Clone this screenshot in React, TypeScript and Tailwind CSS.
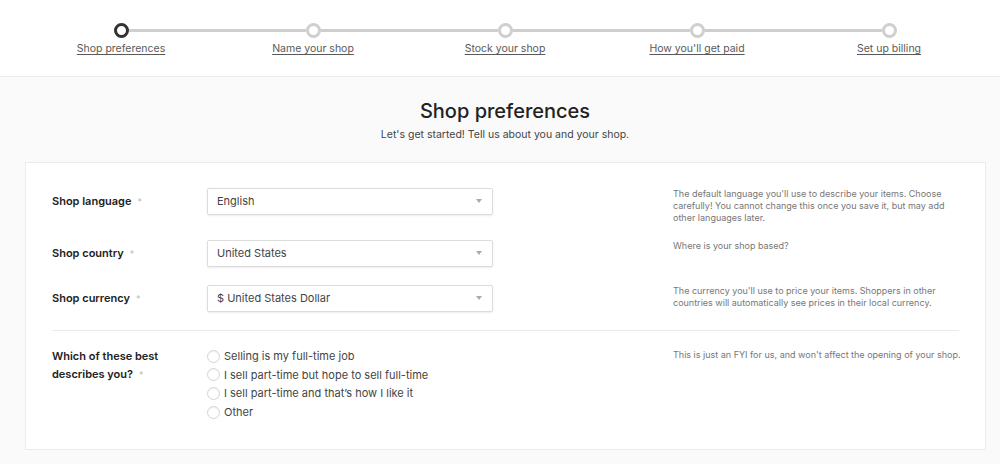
import React from "react";

const steps = ["Shop preferences", "Name your shop", "Stock your shop", "How you'll get paid", "Set up billing"];

const selects = [
  {
    label: "Shop language",
    value: "English",
    help: "The default language you'll use to describe your items. Choose carefully! You cannot change this once you save it, but may add other languages later.",
    h: "h-[52px]",
  },
  { label: "Shop country", value: "United States", help: "Where is your shop based?", h: "h-[45px]" },
  {
    label: "Shop currency",
    value: "$ United States Dollar",
    help: "The currency you'll use to price your items. Shoppers in other countries will automatically see prices in their local currency.",
    h: "h-[45px]",
  },
];

const options = [
  "Selling is my full-time job",
  "I sell part-time but hope to sell full-time",
  "I sell part-time and that’s how I like it",
  "Other",
];

function Select({ value }: { value: string }) {
  return (
    <div className="w-[286px] shrink-0 h-[27px] border border-[#dcdcdc] rounded-[2px] bg-white shadow-[0_1px_2px_rgba(0,0,0,0.08)] flex items-center justify-between pl-[9px] pr-[10px]">
      <span className="text-[11px] text-[#444]">{value}</span>
      <span className="w-0 h-0 border-l-[3px] border-r-[3px] border-t-[4px] border-l-transparent border-r-transparent border-t-[#aaa]" />
    </div>
  );
}

export default function App() {
  return (
    <div className="w-[1000px] h-[464px] bg-[#fafafa] overflow-hidden" style={{ fontFamily: "Inter, 'Liberation Sans', sans-serif" }}>
      {/* Stepper */}
      <div className="h-[77px] bg-white border-b border-[#ececec]">
        <div className="ml-[25px] w-[960px] grid grid-cols-5 pt-[22px]">
          {steps.map((s, i) => (
            <div key={s} className="flex flex-col items-center">
              <div className="w-full flex items-center h-[16px]">
                <div className={`flex-1 h-[3px] ${i === 0 ? "" : "bg-[#cfcfcf]"}`} />
                <div
                  className={`w-[15px] h-[15px] rounded-full bg-white border-[3px] shrink-0 ${
                    i === 0 ? "border-[#333]" : "border-[#cfcfcf]"
                  }`}
                />
                <div className={`flex-1 h-[3px] ${i === 4 ? "" : "bg-[#cfcfcf]"}`} />
              </div>
              <span className="mt-[4px] text-[10.5px] leading-[14px] text-[#595959] underline underline-offset-2">{s}</span>
            </div>
          ))}
        </div>
      </div>

      {/* Heading */}
      <div className="ml-[10px] text-center pt-[21px]">
        <h1 className="text-[20px] leading-[26px] font-medium text-[#222]">Shop preferences</h1>
        <p className="mt-[3px] text-[10.5px] text-[#444]">Let's get started! Tell us about you and your shop.</p>
      </div>

      {/* Card */}
      <div className="ml-[25px] w-[961px] mt-[19px] bg-white border border-[#ececec] px-[26px] pt-[25px] pb-[27px]">
        {selects.map((r) => (
          <div key={r.label} className={`flex items-start ${r.h}`}>
            <div className="w-[155px] shrink-0 h-[27px] flex items-center text-[11px] font-semibold text-[#222]">
              {r.label}
              <span className="ml-[6px] text-[#bbb] font-normal text-[9px]">*</span>
            </div>
            <Select value={r.value} />
            <p className="ml-[180px] w-[286px] shrink-0 text-[9px] leading-[12px] text-[#777]">{r.help}</p>
          </div>
        ))}

        <div className="border-t border-[#eaeaea] pt-[16px] flex items-start">
          <div className="w-[155px] shrink-0 text-[11px] leading-[18px] font-semibold text-[#222]">
            Which of these best
            <br />
            describes you?
            <span className="ml-[6px] text-[#bbb] font-normal text-[9px]">*</span>
          </div>
          <div className="w-[286px] shrink-0 flex flex-col">
            {options.map((o) => (
              <label key={o} className="flex items-center h-[18.7px] gap-[4px]">
                <span className="w-[13px] h-[13px] rounded-full border border-[#d4d4d4] bg-white shadow-[inset_0_1px_1px_rgba(0,0,0,0.06)]" />
                <span className="text-[11px] text-[#444]">{o}</span>
              </label>
            ))}
          </div>
          <p className="ml-[180px] w-[286px] shrink-0 pt-[2px] text-[9px] leading-[12px] text-[#777] whitespace-nowrap">
            This is just an FYI for us, and won't affect the opening of your shop.
          </p>
        </div>
      </div>
    </div>
  );
}
